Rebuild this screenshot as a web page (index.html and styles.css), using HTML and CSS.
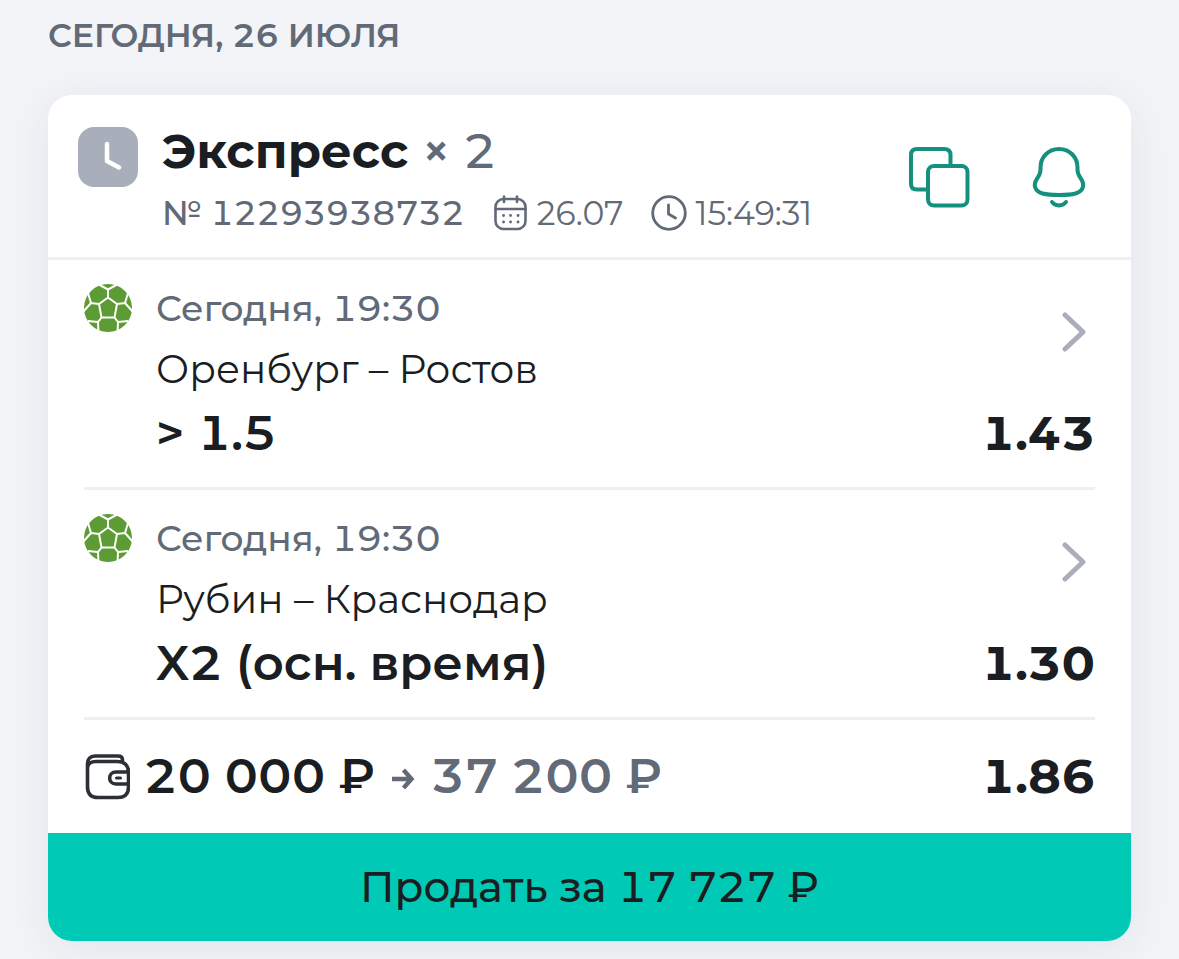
FILE: index.html
```html
<!DOCTYPE html>
<html lang="ru">
  <head>
    <meta charset="UTF-8" />
    <meta name="viewport" content="width=device-width, initial-scale=1.0" />
    <title>История ставок</title>
    <link rel="stylesheet" href="styles.css">
  </head>
  <body>
    <!-- Shared ball icon -->
    <svg class="sprite" aria-hidden="true">
      <symbol id="ball" viewBox="0 0 48 48">
        <circle cx="24" cy="24" r="24" fill="#5d9b34" />
        <path
          d="M24 13.500L33 20L30.500 33.500H17.500L15 20ZM24 13.500V5.500M33 20L41 19M30.500 33.500L34 38M17.500 33.500L14 38M15 20L7 19M14 0L24 5.500L34 0M41 19L44 9M41 19L49 28M7 19L4 9M7 19L-1 28M4 37L14 38L14.500 49M44 37L34 38L33.500 49"
          fill="none" stroke="#fff" stroke-width="2" stroke-linejoin="round" />
      </symbol>
    </svg>

    <main>
      <h2 class="date">Сегодня, 26 июля</h2>

      <article class="card">
        <header class="card-header">
          <svg class="status" viewBox="0 0 60 60" role="img" aria-label="Ожидает расчёта">
            <rect width="60" height="60" rx="16" fill="#a9aebb" />
            <path d="M29 17V34L41 40.500" fill="none" stroke="#fff" stroke-width="4.500" stroke-linecap="round" stroke-linejoin="round" />
          </svg>
          <div class="summary">
            <h1 class="title">Экспресс <span class="count"><b>×</b> 2</span></h1>
            <div class="meta">
              <span class="number">№ 12293938732</span>
              <span class="meta-item">
                <svg class="meta-icon" viewBox="0 0 36 36" aria-hidden="true">
                  <g fill="none" stroke="#626a78" stroke-width="2.600" stroke-linecap="round">
                    <rect x="2.500" y="4" width="30" height="30" rx="8" />
                    <path d="M2.500 14H32.500M11 1.500V7M24 1.500V7" />
                  </g>
                  <path d="M10.500 20.500h.1M17.500 20.500h.1M25 20.500h.1M10.500 27h.1M17.500 27h.1M25 27h.1" stroke="#626a78" stroke-width="2.800" stroke-linecap="round" />
                </svg>
                26.07
              </span>
              <span class="meta-item">
                <svg class="meta-icon" viewBox="0 0 36 36" aria-hidden="true">
                  <g fill="none" stroke="#626a78" stroke-width="2.800" stroke-linecap="round" stroke-linejoin="round">
                    <circle cx="18" cy="18" r="16.300" />
                    <path d="M17.500 10V19L24.500 23" />
                  </g>
                </svg>
                15:49:31
              </span>
            </div>
          </div>
          <div class="actions">
            <button type="button" class="icon-button" aria-label="Копировать">
              <svg viewBox="0 0 62 62" aria-hidden="true">
                <g fill="none" stroke="#15907f" stroke-width="4">
                  <path d="M18 43.500H9C5 43.500 3 41.500 3 38V9C3 5 5 3 9 3H36C40 3 42.500 5 42.500 9V19" />
                  <rect x="20" y="20" width="39.500" height="39.500" rx="6" />
                </g>
              </svg>
            </button>
            <button type="button" class="icon-button" aria-label="Уведомления">
              <svg viewBox="0 0 62 62" aria-hidden="true">
                <g fill="none" stroke="#15907f" stroke-width="4" stroke-linecap="round">
                  <path d="M31 3C20 3 12.500 11.500 12.500 21.500V24C12.500 27 11.500 29 9.500 32C4 39.500 7.500 45.500 14.500 47.500C22 49.500 40 49.500 47.500 47.500C54.500 45.500 58 39.500 52.500 32C50.500 29 49.500 27 49.500 24V21.500C49.500 11.500 42 3 31 3Z" />
                  <path d="M24 56C27 60.500 35 60.500 38 56" />
                </g>
              </svg>
            </button>
          </div>
        </header>

        <ul class="legs">
          <li>
            <a class="leg" href="#orenburg-rostov">
              <svg class="ball" role="img" aria-label="Футбол"><use href="#ball" /></svg>
              <div class="leg-info">
                <time class="leg-time">Сегодня, 19:30</time>
                <span class="teams">Оренбург – Ростов</span>
                <strong class="pick">&gt; 1.5</strong>
              </div>
              <div class="leg-side">
                <svg class="chevron" viewBox="0 0 24 40" aria-hidden="true">
                  <path d="M3 3L21 20L3 37" fill="none" stroke="#aaaebb" stroke-width="5" stroke-linecap="round" stroke-linejoin="round" />
                </svg>
                <strong class="odds">1.43</strong>
              </div>
            </a>
          </li>
          <li>
            <a class="leg" href="#rubin-krasnodar">
              <svg class="ball" role="img" aria-label="Футбол"><use href="#ball" /></svg>
              <div class="leg-info">
                <time class="leg-time">Сегодня, 19:30</time>
                <span class="teams">Рубин – Краснодар</span>
                <strong class="pick">X2 (осн. время)</strong>
              </div>
              <div class="leg-side">
                <svg class="chevron" viewBox="0 0 24 40" aria-hidden="true">
                  <path d="M3 3L21 20L3 37" fill="none" stroke="#aaaebb" stroke-width="5" stroke-linecap="round" stroke-linejoin="round" />
                </svg>
                <strong class="odds">1.30</strong>
              </div>
            </a>
          </li>
        </ul>

        <div class="total">
          <svg class="wallet" viewBox="-1 0 46 46" aria-hidden="true">
            <g fill="none" stroke="#2c2f33" stroke-width="3.600" stroke-linejoin="round">
              <path d="M2.500 14C2.500 10 6 7.500 11 7.500H32C39 7.500 43.500 11 43.500 18V33C43.500 40 40 43.500 33 43.500H13C6 43.500 2.500 40 2.500 33V10C2.500 5 5 2 10 2H33C36 2 37.500 3.500 37.500 6V8.500" />
              <path d="M43.500 18H31C22.500 18 22.500 30 31 30H43.500" />
              <path d="M31.500 24H35.500" stroke-width="3" stroke-linecap="round" />
            </g>
          </svg>
          <span class="stake">20 000 ₽</span>
          <svg class="arrow" viewBox="0 0 24 24" aria-hidden="true">
            <path d="M1 14H19M12.500 5L20.500 14L12.500 23" fill="none" stroke="#626a78" stroke-width="4.400" />
          </svg>
          <span class="win">37 200 ₽</span>
          <strong class="odds">1.86</strong>
        </div>

        <button type="button" class="sell">Продать за 17 727 ₽</button>
      </article>
    </main>
  </body>
</html>
```
FILE: styles.css
```css
* {
  margin: 0;
  padding: 0;
  box-sizing: border-box;
}

body {
  font-family: Montserrat, Inter, "Noto Sans", sans-serif;
  font-variant-numeric: tabular-nums;
  background-color: #f2f4f7;
  color: #1a1d21;
}

svg {
  display: block;
  flex-shrink: 0;
}

button {
  border: none;
  background: none;
  font-family: inherit;
  font-variant-numeric: inherit;
  color: inherit;
  cursor: pointer;
}

.sprite {
  width: 0;
  height: 0;
}

main {
  padding: 11px 48px 18px;
}

.date {
  margin-bottom: 36px;
  font-size: 33px;
  line-height: 48px;
  font-weight: 600;
  text-transform: uppercase;
  color: #626a78;
}

/* Bet card */
.card {
  overflow: hidden;
  background-color: #fff;
  border-radius: 24px;
  box-shadow: 0 8px 48px rgba(40, 55, 90, 0.08);
}

.card-header {
  display: flex;
  align-items: flex-start;
  padding: 22px 41px 16px 30px;
  border-bottom: 3px solid #edeff2;
}

.status {
  width: 60px;
  height: 60px;
  margin-top: 10px;
}

.summary {
  flex: 1;
  padding-left: 24px;
}

.title {
  font-size: 48px;
  line-height: 68px;
  font-weight: 700;
}

.count {
  font-weight: 500;
  color: #626a78;
}

.count b {
  font-weight: 600;
}

.meta {
  display: flex;
  align-items: center;
  gap: 28px;
  font-size: 33px;
  line-height: 56px;
  color: #626a78;
}

.number {
  font-weight: 500;
}

.meta-item {
  display: flex;
  align-items: center;
  gap: 8px;
  font-weight: 400;
  font-variant-numeric: normal;
}

.meta-icon {
  width: 36px;
  height: 36px;
}

.actions {
  display: flex;
  gap: 58px;
  padding-top: 29px;
}

.icon-button,
.icon-button svg {
  width: 62px;
  height: 62px;
}

/* Events */
.legs {
  padding: 0 36px;
  list-style: none;
}

.legs li {
  border-bottom: 3px solid #edeff2;
}

.leg {
  display: flex;
  align-items: flex-start;
  padding: 18px 0 20px;
  color: inherit;
  text-decoration: none;
}

.ball {
  width: 48px;
  height: 48px;
  margin-top: 6px;
}

.leg-info {
  display: flex;
  flex: 1;
  flex-direction: column;
  padding-left: 24px;
  font-size: 39px;
  line-height: 61px;
}

.leg-time {
  font-size: 36px;
  font-weight: 500;
  color: #626a78;
}

.pick {
  font-size: 48px;
  line-height: 67px;
  font-weight: 600;
}

.leg-side {
  display: flex;
  flex-direction: column;
  align-items: flex-end;
  align-self: stretch;
  justify-content: space-between;
  padding-top: 34px;
}

.chevron {
  width: 24px;
  height: 40px;
  margin-right: 9px;
}

.odds {
  font-size: 48px;
  line-height: 67px;
  font-weight: 700;
}

/* Stake and payout */
.total {
  display: flex;
  align-items: center;
  padding: 23px 36px;
  font-size: 48px;
  line-height: 67px;
  font-weight: 600;
}

.wallet {
  width: 46px;
  height: 46px;
  margin-right: 14px;
}

.arrow {
  width: 24px;
  height: 24px;
  margin: 0 16px;
}

.win {
  flex: 1;
  color: #626a78;
}

.sell {
  display: block;
  width: 100%;
  padding: 24px;
  background-color: #00c9b5;
  font-size: 42px;
  line-height: 60px;
  font-weight: 500;
}
```
